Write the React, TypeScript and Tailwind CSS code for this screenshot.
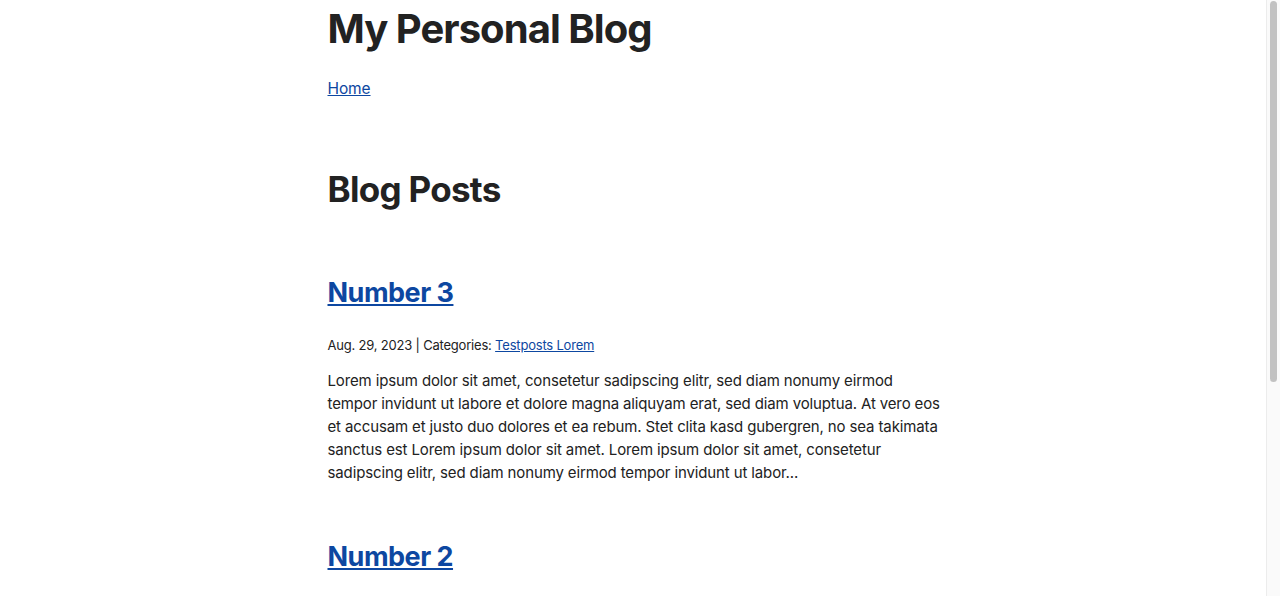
import React from "react";

const lorem =
  "Lorem ipsum dolor sit amet, consetetur sadipscing elitr, sed diam nonumy eirmod tempor invidunt ut labore et dolore magna aliquyam erat, sed diam voluptua. At vero eos et accusam et justo duo dolores et ea rebum. Stet clita kasd gubergren, no sea takimata sanctus est Lorem ipsum dolor sit amet. Lorem ipsum dolor sit amet, consetetur sadipscing elitr, sed diam nonumy eirmod tempor invidunt ut labor...";

const posts = [
  { title: "Number 3", date: "Aug. 29, 2023", cats: "Testposts Lorem" },
  { title: "Number 2", date: "Aug. 29, 2023", cats: "Testposts" },
  { title: "Number 1", date: "Aug. 29, 2023", cats: "Testposts" },
];

export default function App() {
  return (
    <div className="flex h-[596px] overflow-hidden bg-white font-['Inter','Liberation_Sans',sans-serif] text-[#222222]">
      <div className="min-w-0 flex-1">
        <div className="mx-auto w-[611px] pt-[5px] pb-[40px]">
          <header>
            <h1 className="text-[40px] font-bold leading-[48px] tracking-[-0.024em]">My Personal Blog</h1>
            <nav className="mt-[23px]">
              <a href="#" className="text-[15.5px] leading-[24px] tracking-[-0.1px] text-[#0d47a1] underline">
                Home
              </a>
            </nav>
          </header>
          <main className="mt-[66px]">
            <h2 className="text-[35px] font-bold leading-[44px] tracking-[-0.02em]">Blog Posts</h2>
            <div className="mt-[64px] flex flex-col gap-[55px]">
              {posts.map((p) => (
                <article key={p.title}>
                  <h3 className="text-[27px] font-bold leading-[36px] tracking-[-0.5px]">
                    <a href="#" className="text-[#0d47a1] underline">
                      {p.title}
                    </a>
                  </h3>
                  <p className="mt-[24px] text-[13px] leading-[20px] tracking-[-0.2px]">
                    {p.date} | Categories:{" "}
                    <a href="#" className="text-[#0d47a1] underline">
                      {p.cats}
                    </a>
                  </p>
                  <p className="mt-[14px] mr-[-8px] text-[15px] leading-[23px] tracking-[-0.13px]">{lorem}</p>
                </article>
              ))}
            </div>
          </main>
        </div>
      </div>
      <div className="w-[14px] shrink-0 border-l border-[#ececec] bg-[#fafafa] pt-[1px]">
        <div className="mx-auto h-[381px] w-[7px] rounded-full bg-[#c2c2c2]" />
      </div>
    </div>
  );
}
